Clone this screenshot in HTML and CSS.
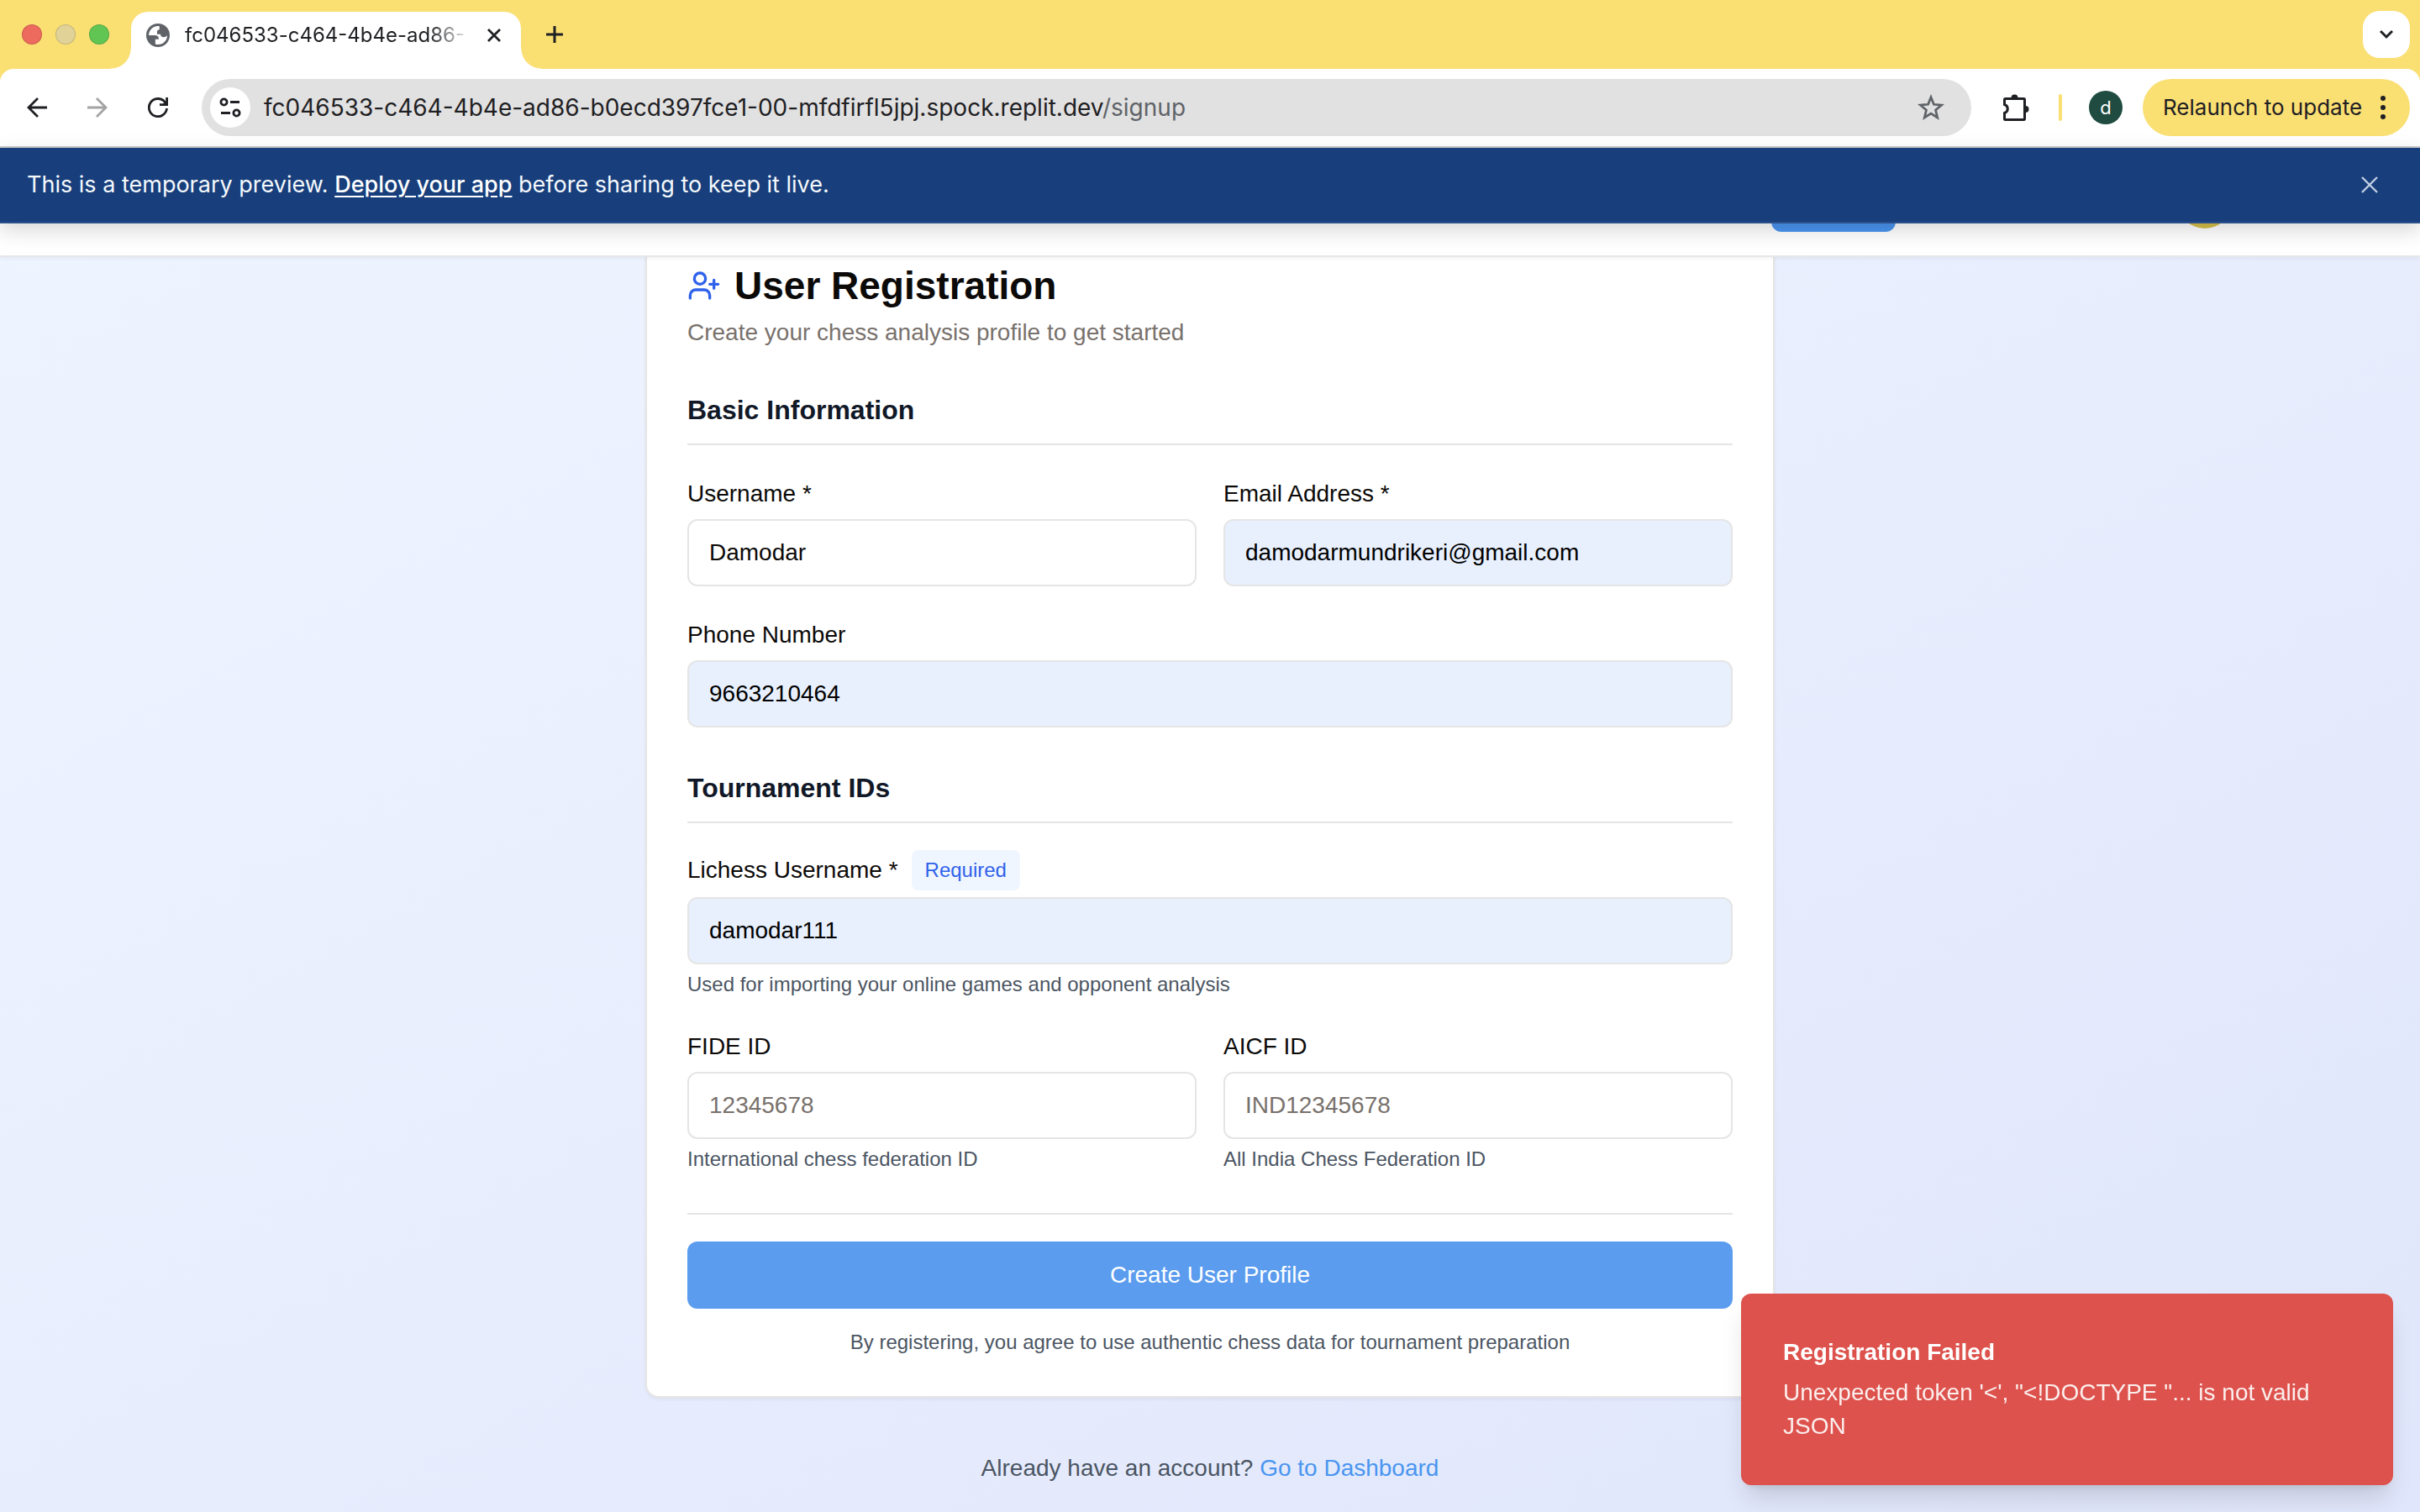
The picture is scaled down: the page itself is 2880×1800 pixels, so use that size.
FILE: index.html
```html
<!DOCTYPE html>
<html lang="en">
<head>
<meta charset="utf-8">
<title>User Registration</title>
<link rel="stylesheet" href="styles.css">
</head>
<body>
<header class="browser">
  <div class="tabstrip">
    <div class="lights"><span class="light light-close"></span><span class="light light-min"></span><span class="light light-max"></span></div>
    <div class="tab">
      <svg class="favicon" viewBox="0 0 24 24" aria-hidden="true"><circle cx="12" cy="12" r="12" fill="#5f6368"/><path d="M13.500 2.700C8 1.900 2.800 6 2.600 12h6.200c2.600 0 3.900 1.200 3.900 3.200v.9H9.300v4.800c6 2 12.200-2.400 12.100-8.900-1 1.600-2.400 2-4 1.900-1.900-.1-2.800-1-2.800-2.900h-3.500V8.500c0-1.500.9-2.300 2.400-2.300z" fill="#fff"/></svg>
      <span class="tab-title">fc046533-c464-4b4e-ad86-</span>
      <button class="icon-btn" aria-label="Close tab"><svg class="ico-close" viewBox="0 0 16 16"><path d="M1 1l14 14M15 1L1 15" fill="none" stroke="#1f2023" stroke-width="2.800"/></svg></button>
    </div>
    <button class="icon-btn new-tab" aria-label="New tab"><svg class="ico-plus" viewBox="0 0 20 20"><path d="M10 0v20M0 10h20" fill="none" stroke="#1f2023" stroke-width="3"/></svg></button>
    <button class="tab-search" aria-label="Search tabs"><svg class="ico-chevron" viewBox="0 0 16 16"><path d="M1 4l7 7 7-7" fill="none" stroke="#1f2023" stroke-width="3"/></svg></button>
  </div>
  <div class="toolbar">
    <div class="nav-buttons">
      <button class="icon-btn" aria-label="Back"><svg class="ico-nav" viewBox="0 0 24 24"><path d="M24 12H2M13 1L2 12l11 11" fill="none" stroke="#1f2023" stroke-width="2.800"/></svg></button>
      <button class="icon-btn" aria-label="Forward" disabled><svg class="ico-nav" viewBox="0 0 24 24"><path d="M0 12h22M11 1l11 11-11 11" fill="none" stroke="#a3a3a3" stroke-width="2.800"/></svg></button>
      <button class="icon-btn" aria-label="Reload"><svg class="ico-nav" viewBox="0 0 24 24"><path d="M22.500 13A10.600 10.600 0 1 1 20 5.200l2.500 2.800" fill="none" stroke="#1f2023" stroke-width="2.800"/><path d="M24 0v10H14V7.200h4l3.200-2V0z" fill="#1f2023"/></svg></button>
    </div>
    <div class="omnibox">
      <button class="site-info" aria-label="Site information"><svg class="ico-tune" viewBox="0 0 26 24"><g fill="none" stroke="#1f2023" stroke-width="2.800"><circle cx="5.500" cy="5.500" r="3.600"/><path d="M13 5.500h11M2 18.500h11"/><circle cx="20.500" cy="18.500" r="3.600"/></g></svg></button>
      <span class="url">fc046533-c464-4b4e-ad86-b0ecd397fce1-00-mfdfirfl5jpj.spock.replit.dev<span class="url-path">/signup</span></span>
      <button class="icon-btn" aria-label="Bookmark"><svg class="ico-star" viewBox="0 0 30 30"><path d="M15 3.500l3.200 8 8.600.7-6.600 5.600 2 8.400-7.200-4.500-7.200 4.500 2-8.400-6.600-5.600 8.600-.7z" fill="none" stroke="#5f6368" stroke-width="2.600"/></svg></button>
    </div>
    <button class="icon-btn" aria-label="Extensions"><svg class="ico-puzzle" viewBox="0 0 34 34"><path d="M4.500 6.500h22q1 0 1 1v23q0 1-1 1h-22q-1 0-1-1v-7c5-1.500 5-8.500 0-10v-6q0-1 1-1z" fill="none" stroke="#1f2023" stroke-width="3"/><path d="M11.500 5.500a4 4 0 0 1 8 0zM28.500 15a4 4 0 0 1 0 8z" fill="#1f2023"/></svg></button>
    <span class="separator"></span>
    <button class="profile" aria-label="Profile">d</button>
    <button class="relaunch">Relaunch to update<svg class="ico-dots" viewBox="0 0 6 30"><circle cx="3" cy="4" r="3"/><circle cx="3" cy="15" r="3"/><circle cx="3" cy="26" r="3"/></svg></button>
  </div>
</header>
<div class="viewport">
  <nav class="site-nav"><span class="nav-pill"></span><span class="nav-avatar"></span></nav>
  <div class="banner">
    <p class="banner-text">This is a temporary preview. <a class="banner-link" href="#deploy">Deploy your app</a> before sharing to keep it live.</p>
    <button class="icon-btn" aria-label="Dismiss"><svg class="ico-dismiss" viewBox="0 0 20 20"><path d="M1 1l18 18M19 1L1 19" fill="none" stroke="#c3cfe3" stroke-width="2.400"/></svg></button>
  </div>
  <main class="page">
    <section class="card">
      <div class="card-title">
        <svg class="ico-user" viewBox="0 0 24 24" fill="none" stroke="#2f62ea" stroke-width="2" stroke-linecap="round" stroke-linejoin="round"><path d="M16 21v-2a4 4 0 0 0-4-4H6a4 4 0 0 0-4 4v2"/><circle cx="9" cy="7" r="4"/><path d="M19 8v6M22 11h-6"/></svg>
        <h1 class="title">User Registration</h1>
      </div>
      <p class="subtitle">Create your chess analysis profile to get started</p>
      <form class="form">
        <section class="group">
          <h2 class="group-title">Basic Information</h2>
          <div class="columns">
            <div class="field"><div class="label-line"><label for="username">Username *</label></div><input id="username" class="input" type="text" value="Damodar"></div>
            <div class="field"><div class="label-line"><label for="email">Email Address *</label></div><input id="email" class="input filled" type="email" value="damodarmundrikeri@gmail.com"></div>
          </div>
          <div class="field"><div class="label-line"><label for="phone">Phone Number</label></div><input id="phone" class="input filled" type="tel" value="9663210464"></div>
        </section>
        <section class="group">
          <h2 class="group-title">Tournament IDs</h2>
          <div class="field"><div class="label-line with-badge"><label for="lichess">Lichess Username *</label><span class="badge">Required</span></div><input id="lichess" class="input filled" type="text" value="damodar111"><p class="help">Used for importing your online games and opponent analysis</p></div>
          <div class="columns">
            <div class="field"><div class="label-line"><label for="fide">FIDE ID</label></div><input id="fide" class="input" type="text" placeholder="12345678"><p class="help">International chess federation ID</p></div>
            <div class="field"><div class="label-line"><label for="aicf">AICF ID</label></div><input id="aicf" class="input" type="text" placeholder="IND12345678"><p class="help">All India Chess Federation ID</p></div>
          </div>
        </section>
        <div class="actions">
          <button class="submit" type="button">Create User Profile</button>
          <p class="terms">By registering, you agree to use authentic chess data for tournament preparation</p>
        </div>
      </form>
    </section>
    <p class="signin">Already have an account? <a class="signin-link" href="#dashboard">Go to Dashboard</a></p>
  </main>
</div>
<div class="toast" role="alert">
  <p class="toast-title">Registration Failed</p>
  <p class="toast-text">Unexpected token '&lt;', "&lt;!DOCTYPE "... is not valid JSON</p>
</div>
</body>
</html>
```
FILE: styles.css
```css
* { box-sizing: border-box; }
body {
  margin: 0;
  min-height: 100vh;
  display: flex;
  flex-direction: column;
  font-family: "Liberation Sans", Arial, sans-serif;
  font-size: 28px;
  line-height: 40px;
  color: #0c0a09;
}
h1, h2, p { margin: 0; }
button, input { font: inherit; color: inherit; margin: 0; }
button { border: 0; padding: 0; background: none; }
svg { display: block; flex: none; }
.icon-btn { display: flex; flex: none; }

/* Browser chrome */
.browser { background: #fadf73; font-family: Inter, sans-serif; color: #1f2023; }
.tabstrip { display: flex; align-items: center; height: 82px; padding: 0 12px 0 26px; }
.lights { display: flex; gap: 16px; width: 130px; }
.light { width: 24px; height: 24px; border-radius: 50%; border: 1px solid rgba(0, 0, 0, 0.14); }
.light-close { background: #ed6a5e; }
.light-min { background: #e1d297; }
.light-max { background: #61c554; }
.tab {
  position: relative;
  align-self: flex-end;
  display: flex;
  align-items: center;
  width: 464px;
  height: 68px;
  padding: 0 24px 12px 18px;
  background: #fff;
  border-radius: 20px 20px 0 0;
}
.tab::before, .tab::after { content: ""; position: absolute; bottom: 0; width: 24px; height: 24px; }
.tab::before { right: 100%; background: radial-gradient(circle at 0 0, transparent 23px, #fff 24px); }
.tab::after { left: 100%; background: radial-gradient(circle at 100% 0, transparent 23px, #fff 24px); }
.favicon { width: 28px; height: 28px; }
.tab-title {
  margin: 0 auto 0 18px;
  white-space: nowrap;
  font-size: 24px;
  -webkit-mask-image: linear-gradient(90deg, #000 290px, transparent 340px);
  mask-image: linear-gradient(90deg, #000 290px, transparent 340px);
}
.ico-close { width: 16px; height: 16px; }
.new-tab { margin-left: 30px; }
.ico-plus { width: 20px; height: 20px; }
.tab-search {
  display: flex;
  align-items: center;
  justify-content: center;
  width: 56px;
  height: 56px;
  margin-left: auto;
  border-radius: 20px;
  background: #fff;
}
.ico-chevron { width: 16px; height: 16px; }
.toolbar {
  display: flex;
  align-items: center;
  height: 94px;
  padding: 0 12px 0 32px;
  background: #fff;
  border-bottom: 2px solid #cbcdce;
  border-radius: 16px 16px 0 0;
}
.nav-buttons { display: flex; gap: 48px; width: 208px; }
.ico-nav { width: 24px; height: 24px; }
.omnibox {
  flex: 1;
  display: flex;
  align-items: center;
  gap: 16px;
  height: 68px;
  padding: 0 32px 0 10px;
  border-radius: 34px;
  background: #e1e1e1;
}
.site-info { display: flex; align-items: center; justify-content: center; width: 48px; height: 48px; border-radius: 50%; background: #fff; }
.ico-tune { width: 26px; height: 24px; }
.url { flex: 1; font-size: 28px; white-space: nowrap; }
.url-path { color: #5f6368; }
.ico-star { width: 32px; height: 32px; }
.omnibox + .icon-btn { margin-left: 36px; }
.ico-puzzle { width: 34px; height: 34px; }
.separator { width: 4px; height: 32px; margin: 0 32px 0 34px; border-radius: 2px; background: #fadf73; }
.profile { width: 40px; height: 40px; margin-right: 24px; border-radius: 50%; background: #1f4b40; color: #fff; font-size: 22px; }
.relaunch { display: flex; align-items: center; justify-content: space-between; width: 318px; height: 68px; padding: 0 29px 0 24px; border-radius: 34px; background: #fadf73; font-size: 26px; white-space: nowrap; }
.ico-dots { width: 6px; height: 30px; fill: #1f2023; }

/* Page area with its overlaid bars */
.viewport { position: relative; flex: 1; display: flex; flex-direction: column; background: linear-gradient(to bottom right, #eff5ff, #e0e6fb); }
.banner {
  position: absolute;
  inset: 0 0 auto;
  z-index: 2;
  display: flex;
  align-items: center;
  justify-content: space-between;
  height: 90px;
  padding: 0 50px 0 32px;
  background: #183f7c;
  border-bottom: 2px solid #2b4f8b;
  box-shadow: 0 8px 24px rgba(0, 0, 0, 0.16);
  color: #f5f9fc;
  font-family: Inter, sans-serif;
  font-size: 27px;
}
.banner-link { color: #fff; font-weight: 500; text-underline-offset: 4px; }
.ico-dismiss { width: 20px; height: 20px; }
.site-nav {
  position: absolute;
  inset: 0 0 auto;
  z-index: 1;
  display: flex;
  align-items: center;
  justify-content: flex-end;
  gap: 336px;
  height: 130px;
  padding-right: 224px;
  background: #fff;
  border-bottom: 2px solid #e5e7eb;
  box-shadow: 0 2px 4px rgba(0, 0, 0, 0.05);
}
.nav-pill { width: 148px; height: 72px; border-radius: 12px; background: #4a95f0; }
.nav-avatar { width: 64px; height: 64px; border-radius: 50%; background: #d6bf49; }
.page { display: flex; flex-direction: column; align-items: center; padding: 90px 32px 32px; }
.card { width: 100%; max-width: 1344px; padding: 48px; background: #fff; border: 2px solid #e7e5e4; border-radius: 16px; box-shadow: 0 2px 4px rgba(0, 0, 0, 0.05); }
.card-title { display: flex; align-items: center; gap: 16px; margin-bottom: 12px; }
.ico-user { width: 40px; height: 40px; }
.title { font-size: 46px; line-height: 48px; }
.subtitle { color: #78716c; }
.form { display: flex; flex-direction: column; gap: 48px; margin-top: 48px; }
.group { display: flex; flex-direction: column; gap: 32px; }
.group-title { padding-bottom: 16px; border-bottom: 2px solid #e5e5e5; font-size: 32px; line-height: 48px; color: #111827; }
.columns { display: grid; grid-template-columns: 1fr 1fr; gap: 32px; }
.field { display: flex; flex-direction: column; gap: 8px; }
.label-line { height: 48px; font-size: 32px; line-height: 48px; }
.label-line label { font-size: 28px; }
.with-badge { display: flex; align-items: center; gap: 16px; }
.badge { padding: 0 16px; border-radius: 8px; background: #eff6ff; color: #2f62ea; font-size: 24px; }
.input { width: 100%; height: 80px; padding: 0 24px; border: 2px solid #e5e5e5; border-radius: 12px; background: #fff; }
.input::placeholder { color: #78716c; opacity: 1; }
.filled { background: #e8f0fe; color: #000; }
.help, .terms { font-size: 24px; line-height: 32px; color: #4b5563; }
.actions { padding-top: 32px; border-top: 2px solid #e5e5e5; }
.submit { display: block; width: 100%; height: 80px; border-radius: 12px; background: #5b9cee; color: #fff; }
.terms { margin-top: 24px; text-align: center; }
.signin { margin-top: 64px; color: #4b5563; }
.signin-link { color: #4a95f0; text-decoration: none; }

.toast {
  position: fixed;
  right: 32px;
  bottom: 32px;
  z-index: 3;
  width: 776px;
  padding: 50px;
  border-radius: 12px;
  background: #dd524c;
  box-shadow: 0 20px 30px -6px rgba(0, 0, 0, 0.14), 0 8px 12px -8px rgba(0, 0, 0, 0.12);
  color: #fff;
}
.toast-title { margin-bottom: 8px; font-weight: 700; }
.toast-text { opacity: 0.9; }
```
